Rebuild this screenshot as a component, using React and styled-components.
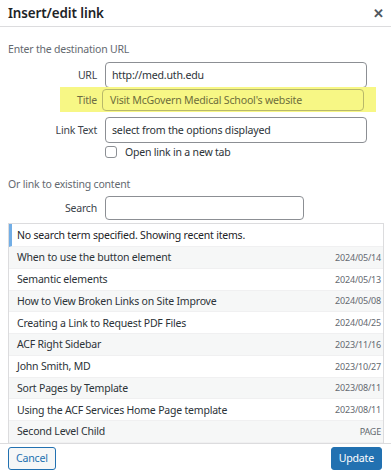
import React from "react";
import styled, { createGlobalStyle } from "styled-components";

const Global = createGlobalStyle`
  html, body { margin: 0; padding: 0; background: #fff; }
  body { font-family: "Noto Sans", "Open Sans", sans-serif; color: #2c3338; letter-spacing: -0.2px; }
  * { box-sizing: border-box; }
`;

const Dialog = styled.div`
  width: 391px;
  height: 473px;
  display: flex;
  flex-direction: column;
  background: #fff;
  overflow: hidden;
`;

const Header = styled.div`
  height: 27px;
  flex: none;
  display: flex;
  align-items: center;
  justify-content: space-between;
  padding: 0 8px;
  border-bottom: 1px solid #dcdcde;
`;

const Title = styled.h1`
  margin: 0;
  font-size: 13.4px;
  font-weight: 600;
  color: #1d2327;
  letter-spacing: -0.1px;
`;

const Close = styled.span`
  font-size: 13px;
  font-weight: 700;
  color: #50575e;
  line-height: 1;
  margin-right: -1px;
`;

const Body = styled.div`
  flex: 1;
  min-height: 0;
  display: flex;
  flex-direction: column;
  padding: 0 8px;
`;

const SectionLabel = styled.div`
  font-size: 10.5px;
  color: #646970;
  margin-top: ${(p) => p.$top}px;
  line-height: 16px;
`;

const FieldRow = styled.div`
  display: grid;
  grid-template-columns: 89px 1fr;
  column-gap: 8px;
  align-items: center;
  margin-top: ${(p) => p.$top || 0}px;
  width: ${(p) => p.$width}px;
`;

const Label = styled.label`
  text-align: right;
  font-size: 10.5px;
  color: #3c434a;
`;

const Input = styled.div`
  height: ${(p) => p.$h || 26}px;
  border: 1px solid #8c8f94;
  border-radius: 4px;
  background: #fff;
  font-size: 10.6px;
  color: #2c3338;
  display: flex;
  align-items: center;
  padding: 0 6px;
  white-space: nowrap;
`;

const Highlight = styled.div`
  margin-left: 52px;
  margin-top: -1px;
  width: 316px;
  height: 25px;
  background: #f7f785;
  display: grid;
  grid-template-columns: 37px 262px;
  column-gap: 5px;
  align-items: center;
`;

const HlLabel = styled.span`
  text-align: right;
  font-size: 10.5px;
  color: #6c6c45;
`;

const HlInput = styled.div`
  height: 22px;
  border: 1px solid #b8b86a;
  border-radius: 4px;
  font-size: 10.6px;
  color: #6e6e3c;
  display: flex;
  align-items: center;
  padding: 0 7px;
  white-space: nowrap;
`;

const CheckRow = styled.div`
  display: flex;
  align-items: center;
  gap: 8px;
  margin-left: 97px;
  margin-top: 2px;
  font-size: 10.5px;
  color: #2c3338;
`;

const Box = styled.span`
  width: 12px;
  height: 12px;
  border: 1px solid #8c8f94;
  border-radius: 3px;
  background: #fff;
`;

const Results = styled.div`
  margin-top: 3px;
  flex: 1;
  min-height: 0;
  border: 1px solid #dcdcde;
  border-bottom: none;
  overflow: hidden;
  width: 376px;
`;

const Notice = styled.div`
  height: 23px;
  border-left: 3px solid #72aee6;
  display: flex;
  align-items: center;
  padding-left: 5px;
  font-size: 10.5px;
  color: #1d2327;
  border-bottom: 1px solid #f0f0f1;
`;

const Item = styled.div`
  height: 21.75px;
  display: flex;
  align-items: center;
  justify-content: space-between;
  padding: 0 2px 0 8px;
  background: ${(p) => (p.$alt ? "#f6f7f7" : "#fff")};
  border-bottom: 1px solid #f0f0f1;
  font-size: 10.5px;
  color: #2c3338;
`;

const ItemDate = styled.span`
  font-size: 9px;
  color: #646970;
`;

const Footer = styled.div`
  flex: none;
  height: 30px;
  border-top: 1px solid #dcdcde;
  display: flex;
  align-items: flex-start;
  justify-content: space-between;
  padding: 3px 9px 0 8px;
`;

const Button = styled.button`
  height: 23px;
  padding: 0 7px;
  border-radius: 3px;
  font-family: inherit;
  letter-spacing: -0.2px;
  font-size: 10.6px;
  line-height: 1;
  border: 1px solid #2271b1;
  background: ${(p) => (p.$primary ? "#2271b1" : "#f6f7f7")};
  color: ${(p) => (p.$primary ? "#fff" : "#2271b1")};
`;

const items = [
  ["When to use the button element", "2024/05/14"],
  ["Semantic elements", "2024/05/13"],
  ["How to View Broken Links on Site Improve", "2024/05/08"],
  ["Creating a Link to Request PDF Files", "2024/04/25"],
  ["ACF Right Sidebar", "2023/11/16"],
  ["John Smith, MD", "2023/10/27"],
  ["Sort Pages by Template", "2023/08/11"],
  ["Using the ACF Services Home Page template", "2023/08/11"],
  ["Second Level Child", "PAGE"],
];

export default function App() {
  return (
    <>
      <Global />
      <Dialog>
        <Header>
          <Title>Insert/edit link</Title>
          <Close>✕</Close>
        </Header>
        <Body>
          <SectionLabel $top={14}>Enter the destination URL</SectionLabel>
          <FieldRow $top={5} $width={359}>
            <Label>URL</Label>
            <Input>http://med.uth.edu</Input>
          </FieldRow>
          <Highlight>
            <HlLabel>Title</HlLabel>
            <HlInput>Visit McGovern Medical School's website</HlInput>
          </Highlight>
          <FieldRow $top={5} $width={359}>
            <Label>Link Text</Label>
            <Input>select from the options displayed</Input>
          </FieldRow>
          <CheckRow>
            <Box />
            Open link in a new tab
          </CheckRow>
          <SectionLabel $top={17}>Or link to existing content</SectionLabel>
          <FieldRow $top={4} $width={296}>
            <Label>Search</Label>
            <Input $h={24} />
          </FieldRow>
          <Results>
            <Notice>No search term specified. Showing recent items.</Notice>
            {items.map(([t, d], i) => (
              <Item key={t} $alt={i % 2 === 0}>
                <span>{t}</span>
                <ItemDate>{d}</ItemDate>
              </Item>
            ))}
          </Results>
        </Body>
        <Footer>
          <Button>Cancel</Button>
          <Button $primary>Update</Button>
        </Footer>
      </Dialog>
    </>
  );
}
